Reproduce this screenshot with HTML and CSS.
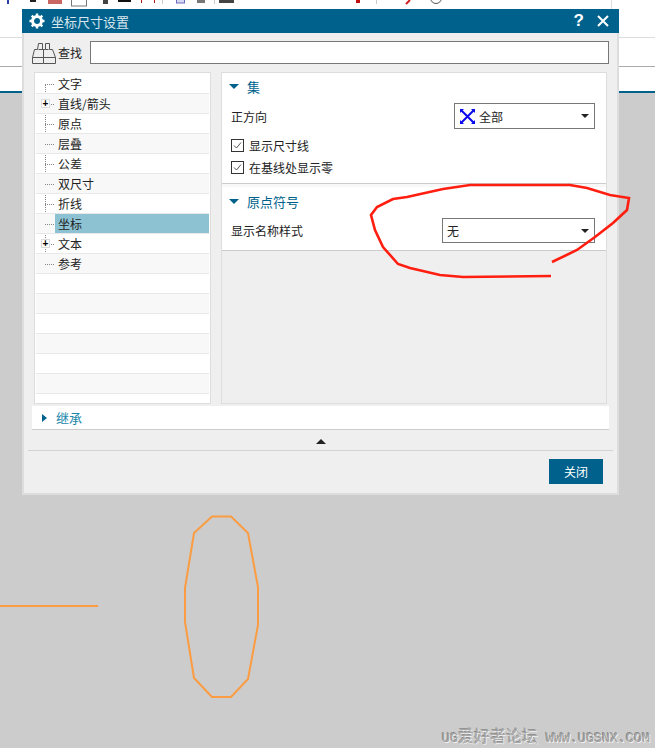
FILE: index.html
```html
<!DOCTYPE html>
<html lang="zh-CN">

<head>
    <meta charset="UTF-8">
    <meta name="viewport" content="width=device-width, initial-scale=1.0">
    <title>坐标尺寸设置</title>
    <link rel="stylesheet" href="styles.css">
</head>

<body>
    <!-- App behind the dialog -->
    <div class="ribbon">
        <svg class="ribbon-bits" width="655" height="9" viewBox="0 0 655 9">
            <rect x="7" y="0" width="2" height="4" fill="#2a3fa8"/>
            <rect x="30" y="0" width="6" height="2" fill="#222"/>
            <rect x="48" y="0" width="14" height="4" fill="#b8332c" opacity=".75"/>
            <rect x="71.5" y="-2" width="15" height="8" fill="#fff" stroke="#777"/>
            <rect x="103" y="0" width="5" height="4" fill="#444"/>
            <rect x="118" y="0" width="13" height="2" fill="#111"/>
            <rect x="141" y="0" width="1" height="3" fill="#b01818"/>
            <rect x="154" y="0" width="1" height="3" fill="#b01818"/>
            <rect x="162" y="0" width="1" height="4" fill="#ccc"/>
            <rect x="176.5" y="-2" width="8" height="5" fill="#d8d8f4" stroke="#6a6ac0"/>
            <rect x="197" y="0" width="8" height="3" fill="#777"/>
            <rect x="214" y="0" width="1" height="4" fill="#ccc"/>
            <rect x="219" y="0" width="15" height="3" fill="#444"/>
            <rect x="356" y="0" width="4" height="3" fill="#c01010"/>
            <rect x="376" y="0" width="1" height="4" fill="#ccc"/>
            <path d="M406 4l4-4" stroke="#d02020" stroke-width="2"/>
            <circle cx="436" cy="-2" r="5.5" fill="none" stroke="#555"/>
            <rect x="611" y="0" width="1" height="9" fill="#ddd"/>
        </svg>
        <div class="ribbon-row"></div>
        <div class="ribbon-row ribbon-row-2"></div>
    </div>
    <div class="canvas"></div>

    <!-- Dialog -->
    <div class="dialog">
        <div class="titlebar">
            <svg class="gear" width="16" height="16" viewBox="0 0 16 16">
                <circle cx="8" cy="8" r="4.5" fill="none" stroke="#fff" stroke-width="3"/>
                <path d="M8 .5v3M8 12.500v3M.5 8h3M12.500 8h3M2.700 2.700l2 2M11.300 11.300l2 2M2.700 13.300l2-2M11.300 4.700l2-2" stroke="#fff" stroke-width="2.400"/>
            </svg>
            <span class="title">坐标尺寸设置</span>
            <span class="help">?</span>
            <svg class="close" width="12" height="12" viewBox="0 0 12 12">
                <path d="M1 1l10 10M11 1L1 11" stroke="#fff" stroke-width="2"/>
            </svg>
        </div>

        <div class="search">
            <svg class="binoculars" width="24" height="22" viewBox="0 0 24 22" fill="none" stroke="#555">
                <path d="M6.500.5h4v6h1v14h-11v-6l2-8h3zM17.500.5h-4v6h-2M17.500.5v6h3l3 8v6h-12M.5 14.500h11M12 14.500h11.500M6.500 6.500h5M13.500 6.500h3"/>
            </svg>
            <span class="search-label">查找</span>
            <input class="search-input" type="text">
        </div>

        <div class="main">
            <div class="tree">
                <div class="tree-line"></div>
                <div class="row">文字</div>
                <div class="row"><span class="plus">+</span>直线/箭头</div>
                <div class="row">原点</div>
                <div class="row">层叠</div>
                <div class="row">公差</div>
                <div class="row">双尺寸</div>
                <div class="row">折线</div>
                <div class="row selected"><span class="row-fill">坐标</span></div>
                <div class="row"><span class="plus">+</span>文本</div>
                <div class="row">参考</div>
                <div class="row empty"></div>
                <div class="row empty"></div>
                <div class="row empty"></div>
                <div class="row empty"></div>
                <div class="row empty"></div>
                <div class="row empty"></div>
            </div>

            <div class="props">
                <div class="section section-set">
                    <div class="section-head"><i class="tri-down"></i>集</div>
                    <div class="field field-first">
                        <span>正方向</span>
                        <div class="select select-dir">
                            <svg class="cross" width="15" height="15" viewBox="0 0 15 15">
                                <path d="M1.500 1.500l12 12M13.500 1.500l-12 12" stroke="#0a0aee" stroke-width="2"/>
                                <path d="M0 0h4L0 4zM15 0v4l-4-4zM0 15v-4l4 4zM15 15h-4l4-4z" fill="#0a0aee"/>
                            </svg>
                            全部<i class="caret"></i>
                        </div>
                    </div>
                    <label class="check">
                        <svg width="13" height="13" viewBox="0 0 13 13" fill="none">
                            <rect x=".5" y=".5" width="12" height="12" stroke="#333"/>
                            <path d="M3 6.500l2.500 2.500L10 3.500" stroke="#555"/>
                        </svg>
                        显示尺寸线
                    </label>
                    <label class="check">
                        <svg width="13" height="13" viewBox="0 0 13 13" fill="none">
                            <rect x=".5" y=".5" width="12" height="12" stroke="#333"/>
                            <path d="M3 6.500l2.500 2.500L10 3.500" stroke="#555"/>
                        </svg>
                        在基线处显示零
                    </label>
                </div>
                <div class="section section-origin">
                    <div class="section-head"><i class="tri-down"></i>原点符号</div>
                    <div class="field">
                        <span>显示名称样式</span>
                        <div class="select select-name">无<i class="caret"></i></div>
                    </div>
                </div>
            </div>
        </div>

        <div class="inherit"><i class="tri-right"></i>继承</div>
        <div class="collapse"><i class="tri-up"></i></div>
        <div class="footer">
            <button class="btn-close">关闭</button>
        </div>
    </div>

    <!-- Things drawn on the screenshot / model view -->
    <svg class="sketch" width="655" height="748" viewBox="0 0 655 748" fill="none">
        <path d="M0 606H98" stroke="#fb9c42" stroke-width="2"/>
        <path d="M212 516.500H231L248 533L258 587V625L248 679L231 697H212L194 678L185 622V588L194 533Z" stroke="#fb9c42" stroke-width="2"/>
        <path d="M552 262L577 250L595 237L613 223L627 210L629 198L610 195L587 188L570 185H470L443 189L407 197L393 199L377 207L371 215L375 230L383 247L398 264L410 268L440 275L463 277L551 276" stroke="#ff1e10" stroke-width="2.600"/>
    </svg>

    <div class="watermark">UG<span class="wm-cjk">爱好者论坛</span> WWW.UGSNX.COM</div>
</body>

</html>
```

FILE: styles.css
```css
* {
    box-sizing: border-box;
}

body {
    margin: 0;
    width: 655px;
    height: 748px;
    position: relative;
    overflow: hidden;
    display: flex;
    flex-direction: column;
    background-color: #cccccc;
    font-family: "Noto Sans CJK SC", "Liberation Sans", sans-serif;
    font-size: 12px;
    color: #222;
}

/* background app */
.ribbon {
    height: 93px;
    background-color: #fff;
    border-bottom: 2px solid #00628c;
    position: relative;
}

.ribbon-bits {
    position: absolute;
    left: 0;
    top: 0;
}

.ribbon-row {
    height: 38px;
    border-bottom: 1px solid #dddddd;
}

.ribbon-row-2 {
    height: 29px;
    border-bottom-color: #aaaaaa;
}

.canvas {
    flex: 1;
    background-color: #cccccc;
}

.sketch {
    position: absolute;
    left: 0;
    top: 0;
    pointer-events: none;
}

.watermark {
    position: absolute;
    left: 442px;
    top: 725px;
    font-family: "Liberation Mono", "Noto Sans CJK SC", monospace;
    font-size: 13.33px;
    line-height: 20px;
    white-space: nowrap;
    color: #a2a2a2;
    text-shadow: 1px 1px 0 #f0f0f0, -1px -1px 0 #8a8a8a;
}

.wm-cjk {
    font-size: 16px;
    font-family: "Noto Sans CJK SC", serif;
    font-weight: 300;
}

/* dialog */
.dialog {
    position: absolute;
    left: 22px;
    top: 9px;
    width: 597px;
    height: 486px;
    background-color: #efefef;
    border-left: 2px solid #dddddd;
    border-right: 2px solid #dddddd;
    border-bottom: 2px solid #dddddd;
}

.titlebar {
    height: 24px;
    margin: 0 -2px;
    display: flex;
    align-items: center;
    padding: 0 10px 0 7px;
    background-color: #00628c;
    color: #fff;
}

.title {
    margin-left: 6px;
    flex: 1;
    font-size: 13px;
    color: #d8e6ee;
}

.help {
    font-family: "Liberation Sans", sans-serif;
    font-weight: bold;
    font-size: 17px;
    margin-right: 13px;
}

.search {
    display: flex;
    align-items: center;
    height: 23px;
    margin: 8px 8px 0;
}

.binoculars {
    flex: none;
    margin-top: 2px;
}

.search-label {
    font-size: 12px;
    margin-left: 2px;
    width: 32px;
}

.search-input {
    flex: 1;
    height: 23px;
    margin: 0;
    background-color: #fff;
    border: 1px solid #777;
    outline: none;
    padding: 0;
}

.main {
    display: flex;
    gap: 10px;
    height: 332px;
    margin: 8px 10px 0;
}

/* tree */
.tree {
    width: 177px;
    position: relative;
    background-color: #fff;
    border: 1px solid #dddddd;
    padding: 1px 1px 0;
}

.tree-line {
    position: absolute;
    left: 10px;
    top: 11px;
    height: 180px;
    border-left: 1px dotted #888;
}

.row {
    position: relative;
    height: 20px;
    line-height: 19px;
    padding-left: 22px;
    border-bottom: 1px solid #e8e8e8;
    white-space: nowrap;
}

.row:nth-child(odd) {
    background-color: #f8f8f8;
}

.row:not(.empty)::before {
    content: "";
    position: absolute;
    left: 9px;
    top: 10px;
    width: 9px;
    border-top: 1px dotted #888;
}

.plus {
    position: absolute;
    left: 5px;
    top: 5px;
    width: 9px;
    height: 9px;
    z-index: 1;
    background-color: #fff;
    border: 1px solid #dddddd;
    font: bold 10px/7px "Liberation Sans", sans-serif;
    text-align: center;
    color: #000;
}

.selected {
    padding-left: 19px;
}

.row-fill {
    display: block;
    height: 19px;
    padding-left: 3px;
    background-color: #8cc2d2;
}

/* right side */
.props {
    flex: 1;
    background-color: #efefef;
    border: 1px solid #dddddd;
}

.section {
    background-color: #fff;
    border-bottom: 1px solid #cccccc;
}

.section-set {
    height: 111px;
}

.section-origin {
    height: 67px;
    border-top: 3px solid #f8f8f8;
    padding-top: 1px;
}

.section-head {
    display: flex;
    align-items: center;
    height: 26px;
    padding-left: 7px;
    font-size: 13px;
    color: #00628c;
}

.tri-down {
    width: 0;
    height: 0;
    margin-right: 8px;
    border-left: 5px solid transparent;
    border-right: 5px solid transparent;
    border-top: 5px solid #00628c;
}

.field {
    display: flex;
    align-items: center;
    justify-content: space-between;
    height: 26px;
    padding: 0 11px 0 9px;
    margin-top: 3px;
}

.field-first {
    margin-top: 4px;
    margin-bottom: 5px;
}

.select {
    display: flex;
    align-items: center;
    height: 26px;
    background-color: #fff;
    border: 1px solid #777;
    position: relative;
    padding-left: 4px;
}

.select-dir {
    width: 141px;
    padding-left: 5px;
}

.select-name {
    width: 153px;
    height: 25px;
}

.cross {
    margin-right: 4px;
}

.caret {
    position: absolute;
    right: 5px;
    top: 10px;
    width: 0;
    height: 0;
    border-left: 4px solid transparent;
    border-right: 4px solid transparent;
    border-top: 4px solid #222;
}

.check {
    display: flex;
    align-items: center;
    gap: 5px;
    height: 22px;
    padding-left: 9px;
}

/* bottom of dialog */
.inherit {
    display: flex;
    align-items: center;
    height: 24px;
    margin: 2px 8px 0;
    padding-left: 10px;
    background-color: #fff;
    border-bottom: 1px solid #cccccc;
    font-size: 13px;
    color: #1a87ab;
}

.tri-right {
    width: 0;
    height: 0;
    margin-right: 9px;
    border-top: 4.500px solid transparent;
    border-bottom: 4.500px solid transparent;
    border-left: 5px solid #00628c;
}

.collapse {
    display: flex;
    justify-content: center;
    align-items: center;
    height: 21px;
    margin: 0 4px;
    padding-top: 2px;
    border-bottom: 1px solid #d2d2d2;
}

.tri-up {
    width: 0;
    height: 0;
    border-left: 5px solid transparent;
    border-right: 5px solid transparent;
    border-bottom: 5px solid #222;
}

.footer {
    display: flex;
    justify-content: flex-end;
    padding: 8px 14px 0 0;
}

.btn-close {
    width: 54px;
    height: 25px;
    padding: 0;
    border: none;
    background-color: #00628c;
    color: #fff;
    font-family: inherit;
    font-size: 12px;
}
```
